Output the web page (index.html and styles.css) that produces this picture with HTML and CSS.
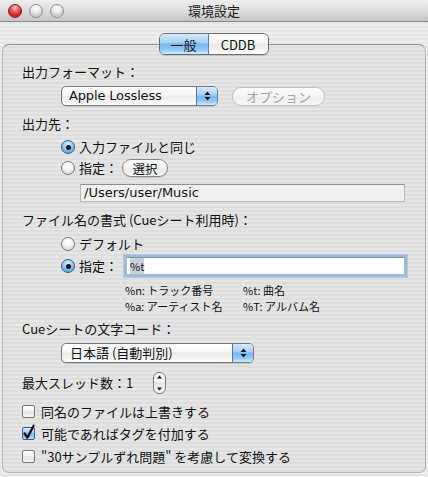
FILE: index.html
```html
<!DOCTYPE html>
<html lang="ja">
<head>
<meta charset="utf-8">
<title>環境設定</title>
<link rel="stylesheet" href="styles.css">
</head>
<body>
<div class="window">
  <div class="titlebar">
    <div class="lights">
      <span class="light red"></span>
      <span class="light"></span>
      <span class="light"></span>
    </div>
    <div class="title">環境設定</div>
    <div></div>
  </div>
  <div class="content">
    <div class="tabs">
      <div class="seg">
        <span class="seg-item active">一般</span>
        <span class="seg-item second">CDDB</span>
      </div>
    </div>
    <div class="panel">
      <div class="label l1">出力フォーマット：</div>
      <div class="row-popup">
        <div class="popup w1">
          <span class="popup-text latin">Apple Lossless</span>
          <span class="popup-arrows"><svg width="7" height="10" viewBox="0 0 7 10"><polygon points="0.5,4 3.5,0.5 6.5,4" fill="#111"/><polygon points="0.5,6 3.5,9.5 6.5,6" fill="#111"/></svg></span>
        </div>
        <div class="btn disabled w-opt">オプション</div>
      </div>
      <div class="label l2">出力先：</div>
      <div class="radio-row r1"><span class="radio on"></span><span class="rtext">入力ファイルと同じ</span></div>
      <div class="radio-row r2"><span class="radio"></span><span class="rtext">指定：</span><span class="btn w-sel">選択</span></div>
      <div class="field path latin">/Users/user/Music</div>
      <div class="label l3">ファイル名の書式 (Cueシート利用時)：</div>
      <div class="radio-row r3"><span class="radio"></span><span class="rtext">デフォルト</span></div>
      <div class="radio-row r4"><span class="radio on"></span><span class="rtext">指定：</span><span class="field focus"><span class="sel">%t</span></span></div>
      <div class="hints">
        <span>%n: トラック番号</span><span>%t: 曲名</span>
        <span>%a: アーティスト名</span><span>%T: アルバム名</span>
      </div>
      <div class="label l4">Cueシートの文字コード：</div>
      <div class="row-popup p2">
        <div class="popup w2">
          <span class="popup-text t2">日本語 (自動判別)</span>
          <span class="popup-arrows"><svg width="7" height="10" viewBox="0 0 7 10"><polygon points="0.5,4 3.5,0.5 6.5,4" fill="#111"/><polygon points="0.5,6 3.5,9.5 6.5,6" fill="#111"/></svg></span>
        </div>
      </div>
      <div class="thread-row">
        <span class="tlabel">最大スレッド数：1</span>
        <span class="stepper"><svg width="7" height="18" viewBox="0 0 7 18"><polygon points="1,4.5 3.5,1.5 6,4.5" fill="#111"/><polygon points="1,13.5 3.5,16.5 6,13.5" fill="#111"/></svg></span>
      </div>
      <div class="check-row c1"><span class="check"></span><span>同名のファイルは上書きする</span></div>
      <div class="check-row c2"><span class="check on"><svg width="13" height="13" viewBox="0 0 13 13"><path d="M2.6 6.4 L5.4 10.6 L11.6 -1.2" fill="none" stroke="#0a0a0a" stroke-width="2.3" stroke-linecap="round" stroke-linejoin="round"/></svg></span><span>可能であればタグを付加する</span></div>
      <div class="check-row c3"><span class="check"></span><span>"30サンプルずれ問題" を考慮して変換する</span></div>
    </div>
  </div>
</div>
</body>
</html>
```

FILE: styles.css
```css
html, body {
  margin: 0;
  padding: 0;
}
body {
  width: 428px;
  height: 477px;
  overflow: hidden;
  font-family: "Noto Sans CJK JP", sans-serif;
  font-size: 13px;
  color: #111;
  background: repeating-linear-gradient(to bottom, #eeeeee 0, #eeeeee 2px, #e7e7e7 2px, #e7e7e7 4px);
}
.latin {
  font-family: "DejaVu Sans", "Noto Sans CJK JP", sans-serif;
}
.window {
  width: 428px;
  height: 477px;
}
.titlebar {
  height: 21px;
  border-bottom: 1px solid #8a8a8a;
  background: linear-gradient(to bottom, #eeeeee 0%, #dddddd 50%, #c4c4c4 100%);
  display: grid;
  grid-template-columns: 1fr auto 1fr;
  align-items: center;
}
.lights {
  display: flex;
  gap: 7px;
  padding-left: 8px;
}
.light {
  width: 14px;
  height: 14px;
  box-sizing: border-box;
  border-radius: 50%;
  border: 1px solid #8f8f8f;
  background: radial-gradient(circle at 50% 25%, #ffffff 0%, #f2f2f2 30%, #c9c9c9 75%, #e8e8e8 100%);
}
.light.red {
  border-color: #8b1c1c;
  background: radial-gradient(circle at 50% 25%, #ffd0d0 0%, #f26a6a 30%, #c81f1f 70%, #e85a5a 100%);
}
.title {
  font-size: 13px;
  line-height: 21px;
  color: #1c1c1c;
}
.content {
  padding-top: 11px;
}
.tabs {
  display: flex;
  justify-content: center;
  position: relative;
  z-index: 1;
  padding-right: 1px;
}
.seg {
  display: flex;
  height: 22px;
  box-sizing: border-box;
  border: 1px solid #6e6e6e;
  border-radius: 6px;
  overflow: hidden;
  box-shadow: 0 1px 1px rgba(0,0,0,0.15);
}
.seg-item {
  display: flex;
  align-items: center;
  justify-content: center;
  font-size: 13px;
  background: linear-gradient(to bottom, #ffffff 0%, #f5f5f5 45%, #e8e8e8 50%, #f3f3f3 80%, #ffffff 100%);
}
.seg-item.active {
  width: 48px;
  border-right: 1px solid #5b7fae;
  background: linear-gradient(to bottom, #d6eafc 0%, #a3cff6 45%, #75b5f0 50%, #92cbf8 80%, #c9efff 100%);
}
.seg-item.second {
  width: 59px;
}
.panel {
  margin: -11px 2px 0;
  height: 429px;
  box-sizing: border-box;
  border: 1px solid #b3b3b3;
  border-top-color: #939393;
  border-radius: 7px;
  background: rgba(0,0,0,0.035);
  padding: 19px 19px 0;
}
.label {
  line-height: 16px;
  height: 16px;
  white-space: nowrap;
}
.l2, .l3 { margin-top: 10px; }
.l4 { margin-top: 7px; }
.row-popup {
  display: flex;
  align-items: center;
  margin: 6px 0 0 39px;
  height: 20px;
}
.row-popup.p2 { margin-top: 6px; }
.popup {
  display: flex;
  height: 20px;
  box-sizing: border-box;
  border: 1px solid #7b7b7b;
  border-radius: 5px;
  overflow: hidden;
  background: linear-gradient(to bottom, #ffffff 0%, #f7f7f7 45%, #ebebeb 50%, #f4f4f4 80%, #ffffff 100%);
  box-shadow: 0 1px 1px rgba(0,0,0,0.12);
}
.popup.w1 { width: 157px; }
.popup.w2 { width: 193px; }
.popup-text {
  flex: 1;
  padding-left: 7px;
  line-height: 18px;
  font-size: 13px;
  letter-spacing: -0.15px;
  white-space: nowrap;
}
.popup-text.t2 {
  padding-left: 8px;
  letter-spacing: 0;
}
.popup-arrows {
  width: 20px;
  border-left: 1px solid #56789f;
  display: flex;
  align-items: center;
  justify-content: center;
  background: linear-gradient(to bottom, #d6eafc 0%, #a3cff6 45%, #75b5f0 50%, #92cbf8 80%, #c9efff 100%);
}
.btn {
  display: inline-flex;
  align-items: center;
  justify-content: center;
  height: 18px;
  box-sizing: border-box;
  border: 1px solid #878787;
  border-radius: 9px;
  font-size: 12.5px;
  background: linear-gradient(to bottom, #ffffff 0%, #f6f6f6 45%, #e9e9e9 50%, #f3f3f3 80%, #ffffff 100%);
  box-shadow: 0 1px 1px rgba(0,0,0,0.12);
}
.btn.disabled {
  color: #a4a4a4;
  border-color: #c0c0c0;
  background: linear-gradient(to bottom, #fafafa 0%, #f4f4f4 50%, #eeeeee 50%, #f7f7f7 100%);
  box-shadow: none;
}
.w-opt {
  width: 93px;
  margin-left: 14px;
  height: 19px;
  font-size: 13px;
}
.w-sel {
  width: 46px;
  margin-left: 4px;
}
.radio-row {
  display: flex;
  align-items: center;
  margin-left: 39px;
  height: 16px;
  white-space: nowrap;
}
.r1 { margin-top: 7px; }
.r2 { margin-top: 4px; height: 18px; }
.r3 { margin-top: 8px; }
.r4 { margin-top: 4px; height: 20px; }
.radio {
  width: 14px;
  height: 14px;
  box-sizing: border-box;
  border-radius: 50%;
  border: 1px solid #7a7a7a;
  background: radial-gradient(circle at 50% 30%, #ffffff 0%, #f6f6f6 40%, #dadada 80%, #f0f0f0 100%);
  display: flex;
  align-items: center;
  justify-content: center;
  flex: none;
}
.radio.on {
  border-color: #3d5f8f;
  background: radial-gradient(circle at 50% 30%, #e2f1ff 0%, #9fcdf6 40%, #5da6ec 80%, #a9dbff 100%);
}
.radio.on::after {
  content: "";
  width: 5px;
  height: 5px;
  border-radius: 50%;
  background: #111;
}
.rtext {
  margin-left: 4px;
  line-height: 16px;
}
.field {
  box-sizing: border-box;
  height: 18px;
  border: 1px solid #b9b9b9;
  border-top-color: #8e8e8e;
}
.field.path {
  margin: 7px 0 0 58px;
  width: 325px;
  background: #f1f1f1;
  font-size: 13px;
  line-height: 16px;
  padding-left: 3px;
}
.field.focus {
  margin-left: 8px;
  width: 279px;
  background: #ffffff;
  font-size: 11px;
  line-height: 16px;
  padding-left: 3px;
  box-shadow: 0 0 0 2px #98bbe6, 0 0 0 3px rgba(140,175,225,0.5);
}
.sel {
  background: #c6d0df;
}
.hints {
  display: grid;
  grid-template-columns: 118px auto;
  margin: 6px 0 0 103px;
  font-size: 11px;
  line-height: 16px;
  white-space: nowrap;
}
.thread-row {
  display: flex;
  align-items: center;
  margin-top: 9px;
  height: 22px;
}
.tlabel {
  width: 131px;
  line-height: 16px;
  white-space: nowrap;
}
.stepper {
  width: 13px;
  height: 22px;
  box-sizing: border-box;
  border: 1px solid #7b7b7b;
  border-radius: 6px;
  display: flex;
  align-items: center;
  justify-content: center;
  background: linear-gradient(to bottom, #ffffff 0%, #f2f2f2 45%, #e4e4e4 50%, #f2f2f2 80%, #ffffff 100%);
}
.check-row {
  display: flex;
  align-items: center;
  height: 16px;
  white-space: nowrap;
}
.c1 { margin-top: 9px; }
.c2 { margin-top: 6px; }
.c3 { margin-top: 7px; }
.check {
  width: 13px;
  height: 13px;
  box-sizing: border-box;
  border: 1px solid #7a7a7a;
  border-radius: 2px;
  margin-right: 6px;
  flex: none;
  background: linear-gradient(to bottom, #ffffff 0%, #f3f3f3 45%, #e2e2e2 55%, #f6f6f6 100%);
}
.check.on {
  border-color: #3d5f8f;
  background: linear-gradient(to bottom, #d6eafc 0%, #a3cff6 45%, #75b5f0 55%, #b5e2ff 100%);
}
.check svg {
  display: block;
  overflow: visible;
  margin: -1px 0 0 -1px;
}
```
